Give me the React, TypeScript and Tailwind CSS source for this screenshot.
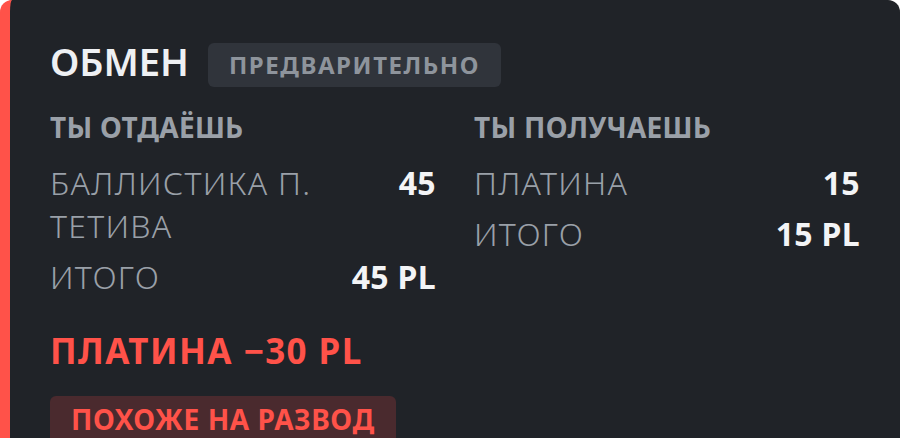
import React from "react";

type Row = { label: string; value: string };

const give: Row[] = [
  { label: "Баллистика п. тетива", value: "45" },
  { label: "Итого", value: "45 PL" },
];

const get: Row[] = [
  { label: "Платина", value: "15" },
  { label: "Итого", value: "15 PL" },
];

function Side({ title, rows }: { title: string; rows: Row[] }) {
  return (
    <div className="flex flex-col">
      <div className="text-[28px] font-bold uppercase leading-[36px] tracking-[0.01em] text-[#9aa0a8]">
        {title}
      </div>
      <div className="mt-4 flex flex-col gap-2">
        {rows.map((r, i) => (
          <div key={i} className="flex items-start justify-between gap-6">
            <span className="min-w-0 text-[32px] font-light uppercase leading-[43px] tracking-[0.04em] text-[#9aa0a8]">
              {r.label}
            </span>
            <span className="shrink-0 whitespace-nowrap text-[32px] font-bold uppercase leading-[43px] tracking-[0.01em] text-[#f3f4f6]">
              {r.value}
            </span>
          </div>
        ))}
      </div>
    </div>
  );
}

export default function App() {
  return (
    <div
      className="min-h-screen bg-white"
      style={{ fontFamily: '"Noto Sans", "Open Sans", sans-serif' }}
    >
      <div className="h-[438px] overflow-hidden rounded-t-xl border-l-[10px] border-[#ff5249] bg-[#202328] px-10 pt-[43px]">
        <div className="flex items-start gap-[19px]">
          <h1 className="text-[38px] font-semibold uppercase leading-[36px] text-[#eef0f3]">
            Обмен
          </h1>
          <span className="h-11 rounded-md bg-[#30343b] px-[21px] text-[24px] font-bold uppercase leading-[44px] tracking-[0.065em] text-[#8e949c]">
            Предварительно
          </span>
        </div>

        <div className="mt-[22px] grid grid-cols-2 gap-[38px]">
          <Side title="Ты отдаёшь" rows={give} />
          <Side title="Ты получаешь" rows={get} />
        </div>

        <div className="mt-[31px] text-[35px] font-bold uppercase leading-[44px] tracking-[0.04em] text-[#ff5249]">
          Платина −30 PL
        </div>

        <div className="mt-[23px] inline-block rounded-md bg-[#4a2a2e] px-[21px] pb-[6px] pt-[5px] text-[28px] font-bold uppercase leading-[36px] tracking-[0.02em] text-[#ff5249]">
          Похоже на развод
        </div>
      </div>
    </div>
  );
}
